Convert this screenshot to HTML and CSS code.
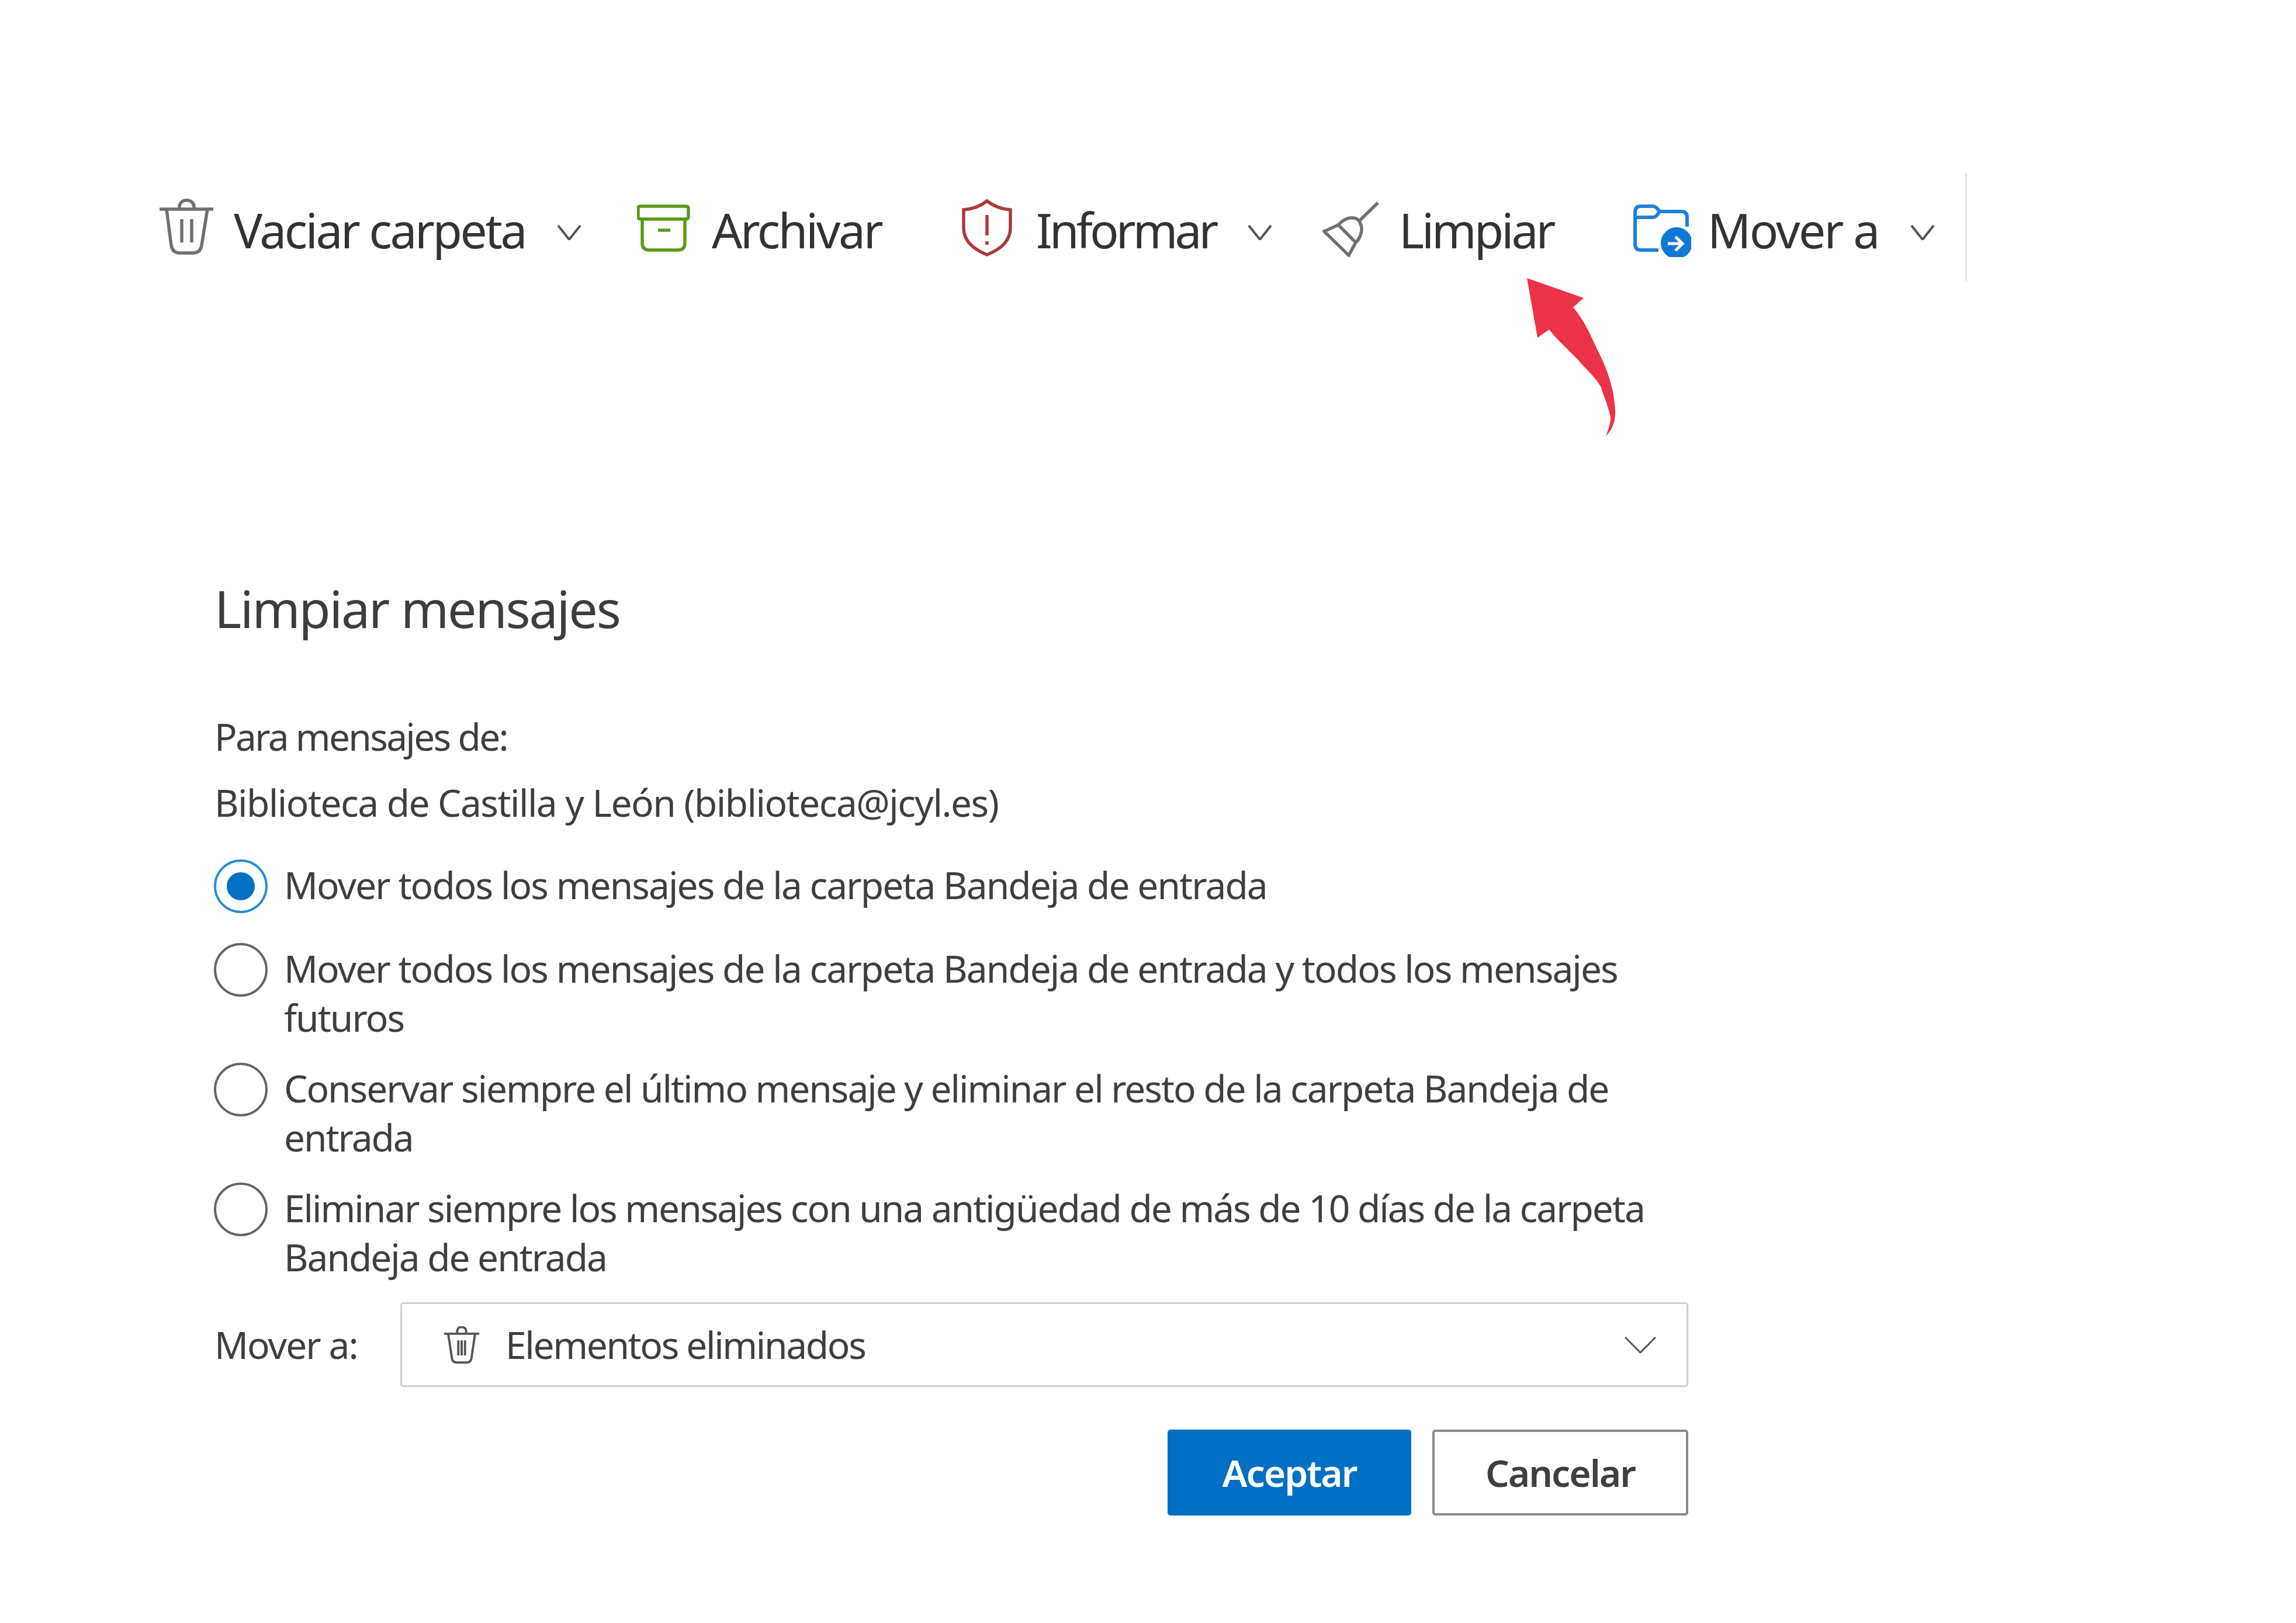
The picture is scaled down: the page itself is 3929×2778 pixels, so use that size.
FILE: index.html
```html
<!DOCTYPE html>
<html lang="es">
<head>
<meta charset="utf-8">
<title>Limpiar mensajes</title>
<link rel="stylesheet" href="styles.css">
</head>
<body>
<svg class="arrow" viewBox="0 0 200 300" aria-hidden="true"><path d="M0 0L97 34L79 50C100 75 110 100 121 124C135 150 150 190 151 227C152 245 145 262 135 270C143 250 144 240 142 234C138 215 130 200 127 187C118 172 108 162 97 151C78 128 55 110 38 88L18 102Z"/></svg>
<div class="toolbar">
  <div class="tool tool-empty">
    <svg class="icon" viewBox="0 0 100 100"><g class="st-gray"><path d="M1 18H93M13 18L21 80Q23 93 36 93H58Q71 93 73 80L83 18M35 18V14C35 -1 60 -1 60 14V18M39 35V75M56 35V75"/></g></svg>
    <span class="label">Vaciar carpeta</span>
    <svg class="chev" viewBox="0 0 40 26"><path d="M1 1L20 25L39 1"/></svg>
  </div>
  <div class="tool tool-archive">
    <svg class="icon" viewBox="0 0 100 100"><g class="st-green"><path d="M2 17Q2 13 6 13H84Q88 13 88 17V31Q88 35 84 35H6Q2 35 2 31ZM9 35V76Q9 88 21 88H70Q82 88 82 76V35M36 54H57"/></g></svg>
    <span class="label">Archivar</span>
  </div>
  <div class="tool tool-report">
    <svg class="icon" viewBox="0 0 100 100"><g class="st-red"><path d="M44 4Q28 17 4 19V50Q4 80 44 96Q84 80 84 50V19Q60 17 44 4ZM44 28V63M44 73V79"/></g></svg>
    <span class="label">Informar</span>
    <svg class="chev" viewBox="0 0 40 26"><path d="M1 1L20 25L39 1"/></svg>
  </div>
  <div class="tool tool-clean">
    <svg class="icon" viewBox="0 0 100 100"><g class="st-gray"><path d="M3 56L27 45C42 28 62 30 65 43C70 52 65 68 57 75L45 97ZM27 45L57 75M64 37L95 7"/></g></svg>
    <span class="label">Limpiar</span>
  </div>
  <div class="tool tool-move">
    <svg class="icon" viewBox="0 0 100 100"><g class="st-blue"><path d="M44 88H14Q4 88 4 78V23Q4 13 14 13H34Q38 13 41 16L46 22H83Q93 22 93 32V48M4 32H34Q38 32 41 29L46 22"/></g><circle class="dot-blue" cx="75" cy="76" r="27"/><path class="st-white" d="M60 77H85M73 65L85 77L73 89"/></svg>
    <span class="label">Mover a</span>
    <svg class="chev" viewBox="0 0 40 26"><path d="M1 1L20 25L39 1"/></svg>
  </div>
</div>
<main class="dialog">
  <h1 class="title">Limpiar mensajes</h1>
  <p class="text from-label">Para mensajes de:</p>
  <p class="text from-name">Biblioteca de Castilla y León (biblioteca@jcyl.es)</p>
  <div class="options">
    <div class="option option-single"><span class="radio radio-on"></span><span class="text">Mover todos los mensajes de la carpeta Bandeja de entrada</span></div>
    <div class="option"><span class="radio"></span><span class="text">Mover todos los mensajes de la carpeta Bandeja de entrada y todos los mensajes futuros</span></div>
    <div class="option"><span class="radio"></span><span class="text text-tight">Conservar siempre el último mensaje y eliminar el resto de la carpeta Bandeja de entrada</span></div>
    <div class="option"><span class="radio"></span><span class="text text-tight">Eliminar siempre los mensajes con una antigüedad de más de 10 días de la carpeta Bandeja de entrada</span></div>
  </div>
  <div class="move-row">
    <span class="text move-label">Mover a:</span>
    <div class="select">
      <svg class="select-icon" viewBox="0 0 96 100"><g class="st-dark"><path d="M1 20H95M12 20L22 86Q24 97 34 97H62Q72 97 74 86L84 20M36 20V14C36 -2 60 -2 60 14V20M39 38V78M48 38V78M57 38V78"/></g></svg>
      <span class="text select-text">Elementos eliminados</span>
      <svg class="select-chev" viewBox="0 0 54 28"><path d="M1 1L27 27L53 1"/></svg>
    </div>
  </div>
  <div class="actions">
    <button class="btn btn-primary">Aceptar</button>
    <button class="btn btn-secondary">Cancelar</button>
  </div>
</main>
</body>
</html>
```
FILE: styles.css
```css
* { box-sizing: border-box; }
html, body { margin: 0; padding: 0; background: #fff; }
body {
  position: relative;
  width: 3929px;
  height: 2778px;
  overflow: hidden;
  font-family: "Noto Sans", "Open Sans", sans-serif;
  color: #3f3f3f;
  padding-top: 296px;
}
svg { display: block; fill: none; }
.arrow { position: absolute; left: 2613px; top: 476px; width: 200px; height: 300px; }
.arrow path { fill: #ec3347; }

.toolbar {
  display: flex;
  align-items: center;
  margin-left: 272px;
  width: 3094px;
  height: 185px;
  border-right: 3px solid #e6e6e6;
  padding-top: 14px;
}
.tool { display: flex; align-items: center; flex: none; }
.tool-empty { width: 818px; }
.tool-archive { width: 555px; }
.tool-report { width: 618px; }
.tool-clean { width: 531px; }
.tool-move { width: 560px; }
.tool-clean .label { margin-left: 3px; letter-spacing: -4px; }
.tool-report .label { letter-spacing: -4.9px; }
.tool-move .label { letter-spacing: -2.7px; }
.icon { width: 100px; height: 100px; margin-right: 28px; margin-top: -11px; flex: none; }
.label { font-size: 82px; line-height: 100px; letter-spacing: -3.4px; color: #333; white-space: nowrap; margin-top: -6px; }
.chev { width: 40px; height: 26px; margin-left: 55px; margin-top: 4px; flex: none; }
.chev path { stroke: #555; stroke-width: 4; }
.st-gray path { stroke: #707070; stroke-width: 5.5; }
.st-green path { stroke: #5a9a18; stroke-width: 5.5; }
.st-red path { stroke: #a83a40; stroke-width: 5.5; }
.st-blue path { stroke: #1f80d8; stroke-width: 6; }
.dot-blue { fill: #0f78d4; }
.st-white { stroke: #fff; stroke-width: 5; }

.dialog { width: 2522px; margin: 0 0 0 367px; padding-top: 0; }
.title { margin: 0; padding-top: 500px; font-size: 88px; line-height: 120px; font-weight: 400; letter-spacing: -2.2px; color: #3d3d3d; }
.text { font-size: 64px; line-height: 84px; letter-spacing: -1.95px; color: #3f3f3f; }
.text-tight { letter-spacing: -2.05px; }
.select-text { letter-spacing: -2.35px; }
p.text { margin: 0; }
.from-label { padding-top: 118px; letter-spacing: -2.7px; }
.from-name { padding-top: 29px; letter-spacing: -1.55px; }
.options { padding-top: 57px; display: flex; flex-direction: column; gap: 37px; }
.option { display: flex; gap: 28px; align-items: flex-start; }
.option-single { min-height: 106px; }
.radio { flex: none; width: 92px; height: 92px; margin-left: -1px; margin-top: -2px; border: 4px solid #666; border-radius: 50%; display: flex; align-items: center; justify-content: center; }
.radio-on { border-color: #2a8bd6; }
.radio-on::after { content: ""; width: 48px; height: 48px; border-radius: 50%; background: #0170c4; }
.move-row { display: flex; align-items: center; margin-top: 35px; }
.move-label { width: 318px; flex: none; }
.select { flex: 1; height: 145px; border: 3px solid #cfcfcf; border-radius: 5px; display: flex; align-items: center; padding: 0 52px 0 71px; }
.select-icon { width: 62px; height: 64px; margin-right: 44px; flex: none; }
.select-icon path { stroke: #555; stroke-width: 6; }
.select-chev { width: 54px; height: 28px; margin-left: auto; flex: none; }
.select-chev path { stroke: #555; stroke-width: 3; }
.actions { display: flex; justify-content: flex-end; gap: 36px; margin-top: 73px; }
.btn { height: 147px; border-radius: 5px; font-family: inherit; font-size: 64px; font-weight: 600; letter-spacing: -2px; padding: 0; }
.btn-primary { width: 417px; background: #0170c4; border: none; color: #fff; }
.btn-secondary { width: 438px; background: #fff; border: 4px solid #8a8a8a; color: #3f3f3f; }
```
